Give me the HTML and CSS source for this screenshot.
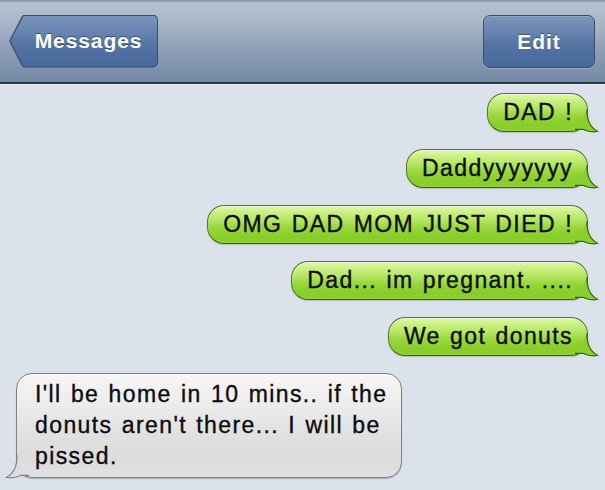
FILE: index.html
```html
<!DOCTYPE html>
<html lang="en">
<head>
<meta charset="utf-8">
<title>Messages</title>
<link rel="stylesheet" href="styles.css">
</head>
<body>
<header class="navbar">
  <a class="back-btn"><span class="back-inner">Messages</span></a>
  <a class="edit-btn">Edit</a>
</header>
<main class="thread">
  <div class="msg out"><div class="bubble green">DAD !<svg class="tail" viewBox="0 0 24 27" width="24" height="27"><path class="tail-fill" d="M0 15 C7 15 10 11 10.5 3 L12.2 3 C12.2 14 15 20 22 24.4 C17 25.6 12 24.6 8 22.9 L0 22.9 Z"/><path class="tail-line" d="M12 2 C12 14 15 20 22.5 24.5 C17 25.5 12 24.3 8 22.3 L0 22.3"/></svg></div></div>
  <div class="msg out"><div class="bubble green">Daddyyyyyyy<svg class="tail" viewBox="0 0 24 27" width="24" height="27"><path class="tail-fill" d="M0 15 C7 15 10 11 10.5 3 L12.2 3 C12.2 14 15 20 22 24.4 C17 25.6 12 24.6 8 22.9 L0 22.9 Z"/><path class="tail-line" d="M12 2 C12 14 15 20 22.5 24.5 C17 25.5 12 24.3 8 22.3 L0 22.3"/></svg></div></div>
  <div class="msg out"><div class="bubble green">OMG DAD MOM JUST DIED !<svg class="tail" viewBox="0 0 24 27" width="24" height="27"><path class="tail-fill" d="M0 15 C7 15 10 11 10.5 3 L12.2 3 C12.2 14 15 20 22 24.4 C17 25.6 12 24.6 8 22.9 L0 22.9 Z"/><path class="tail-line" d="M12 2 C12 14 15 20 22.5 24.5 C17 25.5 12 24.3 8 22.3 L0 22.3"/></svg></div></div>
  <div class="msg out"><div class="bubble green">Dad... im pregnant. ....<svg class="tail" viewBox="0 0 24 27" width="24" height="27"><path class="tail-fill" d="M0 15 C7 15 10 11 10.5 3 L12.2 3 C12.2 14 15 20 22 24.4 C17 25.6 12 24.6 8 22.9 L0 22.9 Z"/><path class="tail-line" d="M12 2 C12 14 15 20 22.5 24.5 C17 25.5 12 24.3 8 22.3 L0 22.3"/></svg></div></div>
  <div class="msg out"><div class="bubble green">We got donuts<svg class="tail" viewBox="0 0 24 27" width="24" height="27"><path class="tail-fill" d="M0 15 C7 15 10 11 10.5 3 L12.2 3 C12.2 14 15 20 22 24.4 C17 25.6 12 24.6 8 22.9 L0 22.9 Z"/><path class="tail-line" d="M12 2 C12 14 15 20 22.5 24.5 C17 25.5 12 24.3 8 22.3 L0 22.3"/></svg></div></div>
  <div class="msg in"><div class="bubble gray">I'll be home in 10 mins.. if the<br>donuts aren't there... I will be<br>pissed.<svg class="tail" viewBox="0 0 24 27" width="24" height="27"><path class="tail-fill" d="M0 15 C7 15 10 11 10.5 3 L12.2 3 C12.2 14 15 20 22 24.4 C17 25.6 12 24.6 8 22.9 L0 22.9 Z"/><path class="tail-line" d="M12 2 C12 14 15 20 22.5 24.5 C17 25.5 12 24.3 8 22.3 L0 22.3"/></svg></div></div>
</main>
</body>
</html>
```
FILE: styles.css
```css
html, body {
  margin: 0;
  padding: 0;
}
body {
  width: 605px;
  height: 490px;
  overflow: hidden;
  background: #dce2ec;
  font-family: "Liberation Sans", Arial, Helvetica, sans-serif;
}

/* ---------- nav bar ---------- */
.navbar {
  box-sizing: border-box;
  height: 84px;
  display: flex;
  align-items: center;
  justify-content: space-between;
  padding: 0 10px 0 9px;
  background: linear-gradient(to bottom, #7f8b9c 0px, #b6c1d0 3px, #a8b5c6 30%, #8d9fb7 60%, #7489a6 100%);
  border-bottom: 2px solid #2c3744;
  box-shadow: 0 1px 0 #eef1f6;
}

.back-btn {
  display: block;
  width: 149px;
  height: 53px;
  padding: 1px;
  box-sizing: border-box;
  background: #3b4d69;
  clip-path: path("M16 0 H143 Q149 0 149 6 V47 Q149 53 143 53 H16 Q14 53 13 51.5 L1 28.5 Q0 26.5 1 24.5 L13 1.5 Q14 0 16 0 Z");
}
.back-inner {
  display: flex;
  align-items: center;
  justify-content: center;
  box-sizing: border-box;
  width: 147px;
  height: 51px;
  padding-left: 10px;
  background: linear-gradient(to bottom, #7a95bc 0%, #6483ae 35%, #5474a3 55%, #46689b 100%);
  clip-path: path("M15.5 0 H142 Q147 0 147 5 V46 Q147 51 142 51 H15.5 Q13.8 51 13 49.5 L1.2 27.2 Q0.5 25.5 1.2 23.8 L13 1.5 Q13.8 0 15.5 0 Z");
}

.back-inner,
.edit-btn {
  color: #ffffff;
  font-weight: bold;
  font-size: 21px;
  letter-spacing: 0.9px;
  text-shadow: 0 -1px 0 rgba(20, 30, 50, 0.55);
}

.edit-btn {
  display: flex;
  align-items: center;
  justify-content: center;
  box-sizing: border-box;
  width: 112px;
  height: 53px;
  padding-top: 1px;
  border: 1px solid #3b4d69;
  border-radius: 7px;
  background: linear-gradient(to bottom, #7a95bc 0%, #6483ae 35%, #5474a3 55%, #46689b 100%);
  box-shadow: inset 0 1px 0 rgba(255, 255, 255, 0.18), 0 1px 0 rgba(255, 255, 255, 0.25);
}

/* ---------- thread ---------- */
.thread {
  display: flex;
  flex-direction: column;
  gap: 17px;
  padding: 9px 17px 0 16px;
}
.msg {
  display: flex;
}
.msg.out {
  justify-content: flex-end;
}
.msg.in {
  justify-content: flex-start;
}

.bubble {
  position: relative;
  box-sizing: border-box;
  color: #0c0c0c;
  font-size: 23px;
  letter-spacing: 1.4px;
  word-spacing: 1.5px;
  -webkit-text-stroke: 0.35px #0c0c0c;
}

.bubble.green {
  height: 39px;
  line-height: 37px;
  padding: 0 14px 0 15px;
  border: 1px solid #4c7a20;
  border-bottom-color: #3a6410;
  border-radius: 17px;
  background: linear-gradient(to bottom,
    #e0f8ae 0%,
    #c9f07f 18%,
    #b0e45e 42%,
    #98d73a 58%,
    #88cd2a 85%,
    #92d236 100%);
  box-shadow: inset 0 1px 1px rgba(255, 255, 255, 0.6), 0 1px 1px rgba(60, 80, 40, 0.25);
}

.bubble.gray {
  width: 386px;
  line-height: 31px;
  padding: 5px 10px 5px 18px;
  border: 1px solid #7f8083;
  border-radius: 16px;
  background: linear-gradient(to bottom,
    #f6f6f6 0%,
    #ececec 30%,
    #e0e0e0 60%,
    #dcdcdc 85%,
    #e2e2e2 100%);
  box-shadow: inset 0 1px 1px rgba(255, 255, 255, 0.8), 0 1px 1px rgba(40, 50, 60, 0.3);
}

.tail {
  position: absolute;
  display: block;
  right: -12px;
  bottom: -3px;
  overflow: visible;
}
.tail-line {
  fill: none;
  stroke-width: 1.2;
}
.green .tail-fill { fill: #8bcf2d; }
.green .tail-line { stroke: #3a6410; }

.gray .tail {
  right: auto;
  left: -12px;
  transform: scaleX(-1);
}
.gray .tail-fill { fill: #dedede; }
.gray .tail-line { stroke: #7f8083; }
```
